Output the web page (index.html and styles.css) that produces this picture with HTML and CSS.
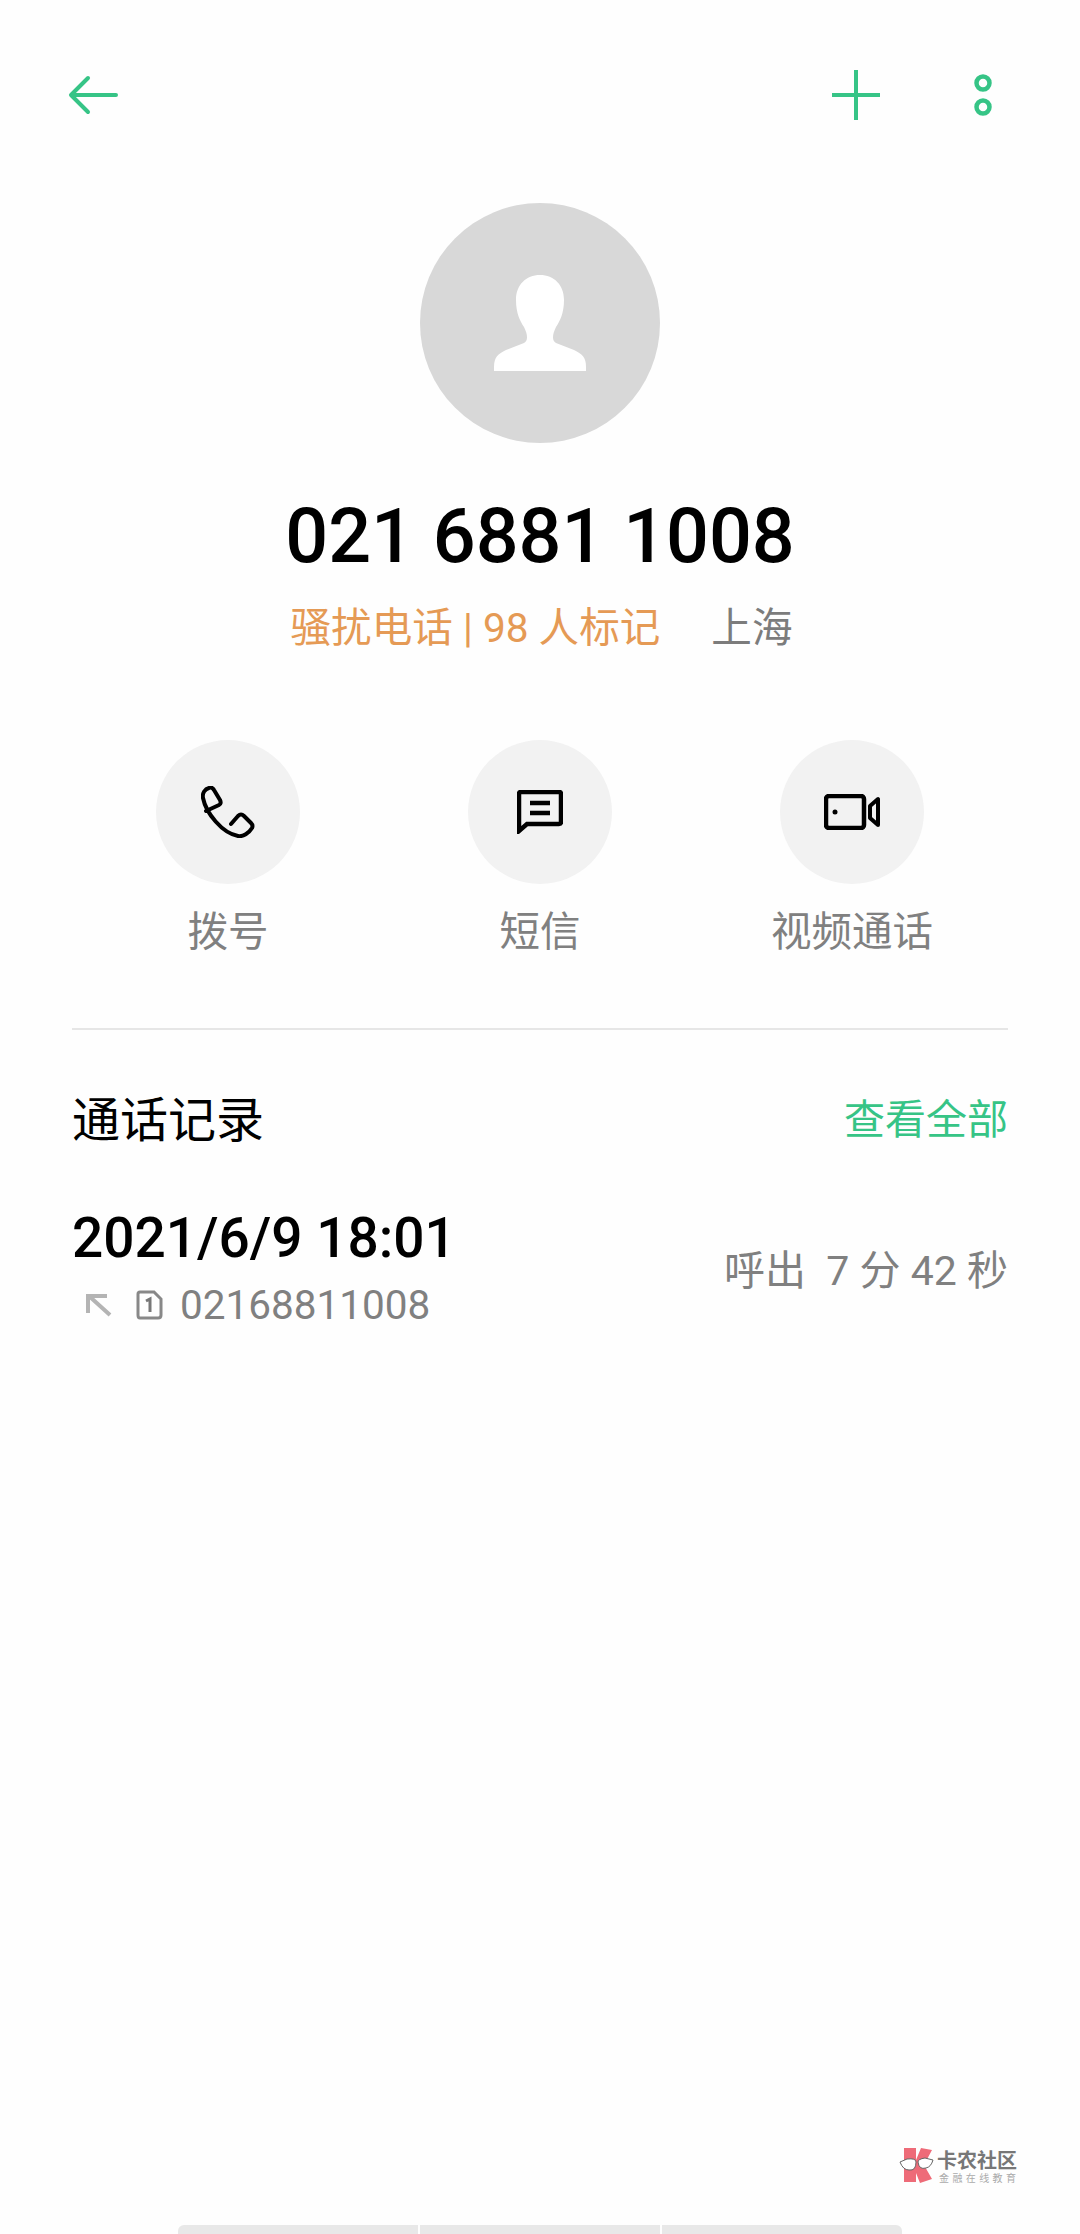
FILE: index.html
```html
<!DOCTYPE html>
<html lang="zh-CN">
<head>
    <meta charset="UTF-8">
    <meta name="viewport" content="width=device-width, initial-scale=1.0">
    <title>021 6881 1008</title>
    <link rel="stylesheet" href="styles.css">
</head>
<body>
    <div class="page">
        <header class="toolbar">
            <svg class="icon-back" width="50" height="40" viewBox="0 0 50 40">
                <path d="M48 20H4M20 3L3 20l17 17" fill="none" stroke="#36c486" stroke-width="4" stroke-linecap="round" stroke-linejoin="round"/>
            </svg>
            <div class="toolbar-right">
                <svg class="icon-add" width="48" height="50" viewBox="0 0 48 50">
                    <path d="M0 25H48M24 0V50" fill="none" stroke="#36c486" stroke-width="4"/>
                </svg>
                <svg class="icon-more" width="18" height="42" viewBox="0 0 18 42">
                    <circle cx="9" cy="9" r="6.5" fill="none" stroke="#36c486" stroke-width="4.5"/>
                    <circle cx="9" cy="33" r="6.5" fill="none" stroke="#36c486" stroke-width="4.5"/>
                </svg>
            </div>
        </header>

        <section class="contact">
            <div class="avatar">
                <svg width="92" height="96" viewBox="0 0 92 96">
                    <path d="M46 0C60 0 70 10 70 25C70 38 66 46 62 52C58 60 58 66 62 68L80 75C88 79 92 82 92 92V96H0V92C0 82 4 79 12 75L30 68C34 66 34 60 30 52C26 46 22 38 22 25C22 10 32 0 46 0Z" fill="#fff"/>
                </svg>
            </div>
            <h1 class="number">021 6881 1008</h1>
            <p class="tag-line"><span class="spam">骚扰电话 | 98 人标记</span><span class="region">上海</span></p>
        </section>

        <section class="actions">
            <div class="action">
                <div class="action-circle">
                    <svg width="54" height="52" viewBox="0 0 54 52">
                        <path d="M8 2C4 3 1 7 2 12C5 27 21 47 37 50C42 51 48 47 51 42C52 40 51 38 50 37L43 30C41 28 39 28 37 30L30 38M8 2C10 1 12 2 13 4L19 14C20 16 20 18 18 19L5 25" fill="none" stroke="#000" stroke-width="4" stroke-linejoin="round" stroke-linecap="round"/>
                    </svg>
                </div>
                <span class="action-label">拨号</span>
            </div>
            <div class="action">
                <div class="action-circle">
                    <svg width="46" height="44" viewBox="0 0 46 44">
                        <path d="M2 41V4Q2 2 4 2H42Q44 2 44 4V32Q44 34 42 34H10Z" fill="none" stroke="#000" stroke-width="4.5"/>
                        <path d="M13 13H33M13 23H33" fill="none" stroke="#000" stroke-width="4.5"/>
                    </svg>
                </div>
                <span class="action-label">短信</span>
            </div>
            <div class="action">
                <div class="action-circle">
                    <svg width="56" height="36" viewBox="0 0 56 36">
                        <rect x="2" y="2" width="38" height="32" rx="3" fill="none" stroke="#000" stroke-width="4.5"/>
                        <circle cx="11" cy="18" r="2.5" fill="#000"/>
                        <path d="M54 5V31L46 24V12Z" fill="none" stroke="#000" stroke-width="4" stroke-linejoin="round"/>
                    </svg>
                </div>
                <span class="action-label">视频通话</span>
            </div>
        </section>

        <section class="history">
            <div class="history-head">
                <h2>通话记录</h2>
                <span class="view-all">查看全部</span>
            </div>
            <div class="call-row">
                <div class="call-info">
                    <div class="call-time">2021/6/9 18:01</div>
                    <div class="call-sub">
                        <svg class="icon-out" width="26" height="24" viewBox="0 0 26 24">
                            <path d="M2 20V3H21M3 3L24 22" fill="none" stroke="#b4b4b4" stroke-width="4"/>
                        </svg>
                        <svg class="icon-sim" width="27" height="30" viewBox="0 0 27 30">
                            <path d="M4 2H18L25 9V25Q25 28 22 28H4Q2 28 2 25V4Q2 2 4 2Z" fill="none" stroke="#888" stroke-width="3"/>
                            <path d="M10 11L14 9V22" fill="none" stroke="#777" stroke-width="3"/>
                        </svg>
                        <span class="call-number">02168811008</span>
                    </div>
                </div>
                <div class="call-detail">呼出&nbsp; 7 分 42 秒</div>
            </div>
        </section>

        <div class="home-bar">
            <span></span><span></span><span></span>
        </div>

        <div class="watermark">
            <svg width="36" height="36" viewBox="0 0 36 36">
                <path d="M5 1H17V13L22 1L33 3L25 18L33 32L21 36L17 26V35H5Z" fill="#ee6b78"/>
                <path d="M1 15L8 12Q17 11 17 15Q17 24 10 23Q4 23 1 15ZM34 13L26 11Q19 12 19 15Q20 23 27 21Q32 20 34 13Z" fill="#fff" stroke="#666" stroke-width="1"/>
            </svg>
            <div class="watermark-text">
                <div class="watermark-name">卡农社区</div>
                <div class="watermark-sub">金融在线教育</div>
            </div>
        </div>
    </div>
</body>
</html>
```

FILE: styles.css
```css
* {
    box-sizing: border-box;
}

html,
body {
    margin: 0;
    padding: 0;
}

body {
    background-color: #fefefe;
    font-family: Roboto, "Noto Sans CJK SC", sans-serif;
}

.page {
    position: relative;
    width: 1080px;
    height: 2234px;
    display: flex;
    flex-direction: column;
    padding: 0 72px;
}

.toolbar {
    display: flex;
    justify-content: space-between;
    align-items: center;
    height: 50px;
    margin-top: 70px;
}

.icon-back {
    margin-left: -4px;
}

.toolbar-right {
    display: flex;
    align-items: center;
    gap: 94px;
    margin-right: 16px;
}

.contact {
    display: flex;
    flex-direction: column;
    align-items: center;
    margin-top: 83px;
}

.avatar {
    width: 240px;
    height: 240px;
    border-radius: 50%;
    background-color: #d8d8d8;
    display: flex;
    align-items: center;
    justify-content: center;
}

.number {
    margin: 48px 0 0;
    font-size: 75.5px;
    font-weight: 500;
    line-height: 90px;
    color: #000;
}

.tag-line {
    margin: 19px 0 0 3px;
    font-size: 40.6px;
    line-height: 56px;
    display: flex;
    gap: 51px;
}

.spam {
    color: #e59a55;
}

.region {
    color: #7c7c7c;
}

.actions {
    display: grid;
    grid-template-columns: repeat(3, 312px);
    justify-content: center;
    margin-top: 84px;
}

.action {
    display: flex;
    flex-direction: column;
    align-items: center;
}

.action-circle {
    width: 144px;
    height: 144px;
    border-radius: 50%;
    background-color: #f2f2f2;
    display: flex;
    align-items: center;
    justify-content: center;
}

.action-label {
    margin-top: 20px;
    font-size: 40.5px;
    line-height: 56px;
    color: #808080;
}

.history {
    margin-top: 68px;
    border-top: 2px solid #e6e6e6;
}

.history-head {
    display: flex;
    justify-content: space-between;
    align-items: center;
    margin-top: 53px;
    height: 66px;
}

.history-head h2 {
    margin: 0;
    font-size: 48px;
    font-weight: 400;
    color: #000;
}

.view-all {
    font-size: 41px;
    color: #36c486;
}

.call-row {
    display: flex;
    justify-content: space-between;
    align-items: center;
    margin-top: 53px;
}

.call-time {
    font-size: 55px;
    font-weight: 500;
    line-height: 72px;
    color: #000;
}

.call-sub {
    display: flex;
    align-items: center;
    margin-top: 5px;
    height: 52px;
}

.icon-out {
    margin-left: 14px;
}

.icon-sim {
    margin-left: 24px;
}

.call-number {
    margin-left: 17px;
    font-size: 40.5px;
    color: #808080;
}

.call-detail {
    font-size: 41px;
    color: #808080;
}

.home-bar {
    display: flex;
    gap: 2px;
    width: 724px;
    height: 9px;
    margin: auto auto 0;
}

.home-bar span {
    flex: 1;
    background-color: #e8e8e8;
}

.home-bar span:first-child {
    border-top-left-radius: 6px;
}

.home-bar span:last-child {
    border-top-right-radius: 6px;
}

.watermark {
    position: absolute;
    left: 899px;
    top: 2147px;
    display: flex;
    gap: 2px;
}

.watermark-name {
    font-size: 20px;
    font-weight: 700;
    line-height: 22px;
    color: #777;
    margin-top: 3px;
}

.watermark-sub {
    font-size: 10px;
    line-height: 12px;
    color: #aaa;
    letter-spacing: 3.4px;
    margin-top: 1px;
    margin-left: 2px;
}
```
